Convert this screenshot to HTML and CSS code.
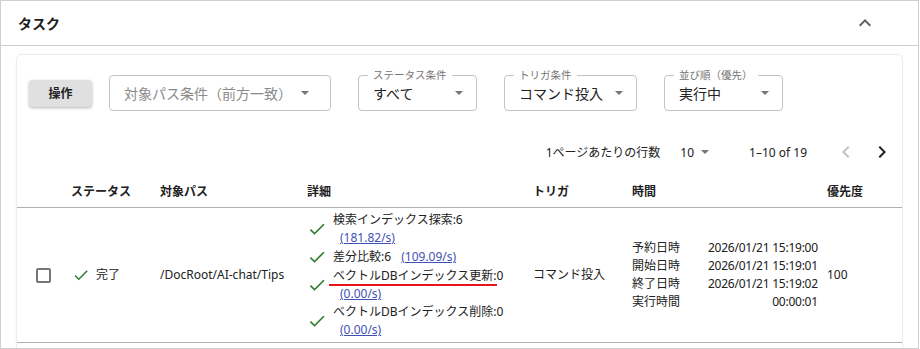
FILE: index.html
```html
<!DOCTYPE html>
<html lang="ja">
<head>
<meta charset="utf-8">
<title>タスク</title>
<link rel="stylesheet" href="styles.css">
</head>
<body>
<div class="panel">
  <div class="panel-header">
    <span class="title">タスク</span>
    <svg class="icon-expand" viewBox="0 0 24 24" width="24" height="24"><path d="M12 8l-6 6 1.41 1.41L12 10.83l4.59 4.58L18 14z"/></svg>
  </div>
  <div class="panel-body">
    <div class="card">
      <div class="filters">
        <button class="op-btn">操作</button>
        <div class="select s-path"><span class="placeholder">対象パス条件（前方一致）</span><span class="caret"></span></div>
        <div class="select s-status"><span class="flabel">ステータス条件</span><span class="value">すべて</span><span class="caret"></span></div>
        <div class="select s-trigger"><span class="flabel">トリガ条件</span><span class="value">コマンド投入</span><span class="caret"></span></div>
        <div class="select s-order"><span class="flabel">並び順（優先）</span><span class="value">実行中</span><span class="caret"></span></div>
      </div>
      <div class="pager">
        <span class="rpp-label">1ページあたりの行数</span>
        <span class="rpp-select">10<span class="caret small"></span></span>
        <span class="range">1–10 of 19</span>
        <svg class="pg-btn disabled" viewBox="0 0 24 24" width="24" height="24"><path d="M15.41 7.41L14 6l-6 6 6 6 1.41-1.41L10.83 12z"/></svg>
        <svg class="pg-btn" viewBox="0 0 24 24" width="24" height="24"><path d="M10 6L8.59 7.41 13.17 12l-4.58 4.59L10 18l6-6z"/></svg>
      </div>
      <div class="table">
        <div class="grid thead">
          <div></div>
          <div>ステータス</div>
          <div>対象パス</div>
          <div>詳細</div>
          <div>トリガ</div>
          <div>時間</div>
          <div>優先度</div>
        </div>
        <div class="grid trow">
          <div class="c-check"><span class="checkbox"></span></div>
          <div class="c-status"><svg class="ok" viewBox="0 0 24 24" width="18" height="18"><path d="M9 16.17L4.83 12l-1.42 1.41L9 19 21 7l-1.41-1.41z"/></svg><span>完了</span></div>
          <div class="c-path">/DocRoot/AI-chat/Tips</div>
          <div class="c-detail">
            <div class="ditem"><svg class="ok" viewBox="0 0 24 24" width="20" height="20"><path d="M9 16.17L4.83 12l-1.42 1.41L9 19 21 7l-1.41-1.41z"/></svg><div class="dtext">検索インデックス探索:6 <a class="rate">(181.82/s)</a></div></div>
            <div class="ditem"><svg class="ok" viewBox="0 0 24 24" width="20" height="20"><path d="M9 16.17L4.83 12l-1.42 1.41L9 19 21 7l-1.41-1.41z"/></svg><div class="dtext">差分比較:6 <a class="rate">(109.09/s)</a></div></div>
            <div class="ditem"><svg class="ok" viewBox="0 0 24 24" width="20" height="20"><path d="M9 16.17L4.83 12l-1.42 1.41L9 19 21 7l-1.41-1.41z"/></svg><div class="dtext marked">ベクトルDBインデックス更新:0 <a class="rate">(0.00/s)</a><span class="redline"></span></div></div>
            <div class="ditem"><svg class="ok" viewBox="0 0 24 24" width="20" height="20"><path d="M9 16.17L4.83 12l-1.42 1.41L9 19 21 7l-1.41-1.41z"/></svg><div class="dtext">ベクトルDBインデックス削除:0 <a class="rate">(0.00/s)</a></div></div>
          </div>
          <div class="c-trigger">コマンド投入</div>
          <div class="c-time">
            <span>予約日時</span><span class="tv">2026/01/21 15:19:00</span>
            <span>開始日時</span><span class="tv">2026/01/21 15:19:01</span>
            <span>終了日時</span><span class="tv">2026/01/21 15:19:02</span>
            <span>実行時間</span><span class="tv">00:00:01</span>
          </div>
          <div class="c-prio">100</div>
        </div>
      </div>
    </div>
  </div>
</div>
</body>
</html>
```

FILE: styles.css
```css
* { box-sizing: border-box; }
html, body { margin: 0; padding: 0; background: #fff; }
body {
  font-family: "Noto Sans", "Noto Sans CJK JP", sans-serif;
  color: #212121;
  font-size: 12px;
}
.panel {
  width: 919px;
  height: 349px;
  border: 1px solid #cfcfcf;
  overflow: hidden;
}
.panel-header {
  height: 45px;
  border-bottom: 1px solid #cfcfcf;
  display: flex;
  align-items: center;
  justify-content: space-between;
  padding: 0 41px 0 17px;
}
.title { font-size: 14px; font-weight: bold; color: #1e1e1e; }
.icon-expand { fill: #5f5f5f; }
.panel-body { padding: 8px 15px 0 15px; }
.card {
  border: 1px solid #ededed;
  border-radius: 6px;
  box-shadow: 0 0 2px rgba(0,0,0,0.06);
  height: 400px;
}
.filters {
  display: flex;
  align-items: center;
  padding: 20px 0 0 12px;
}
.op-btn {
  width: 63px;
  height: 27px;
  border: none;
  border-radius: 4px;
  background: #e0e0e0;
  box-shadow: 0 1px 3px rgba(0,0,0,0.3);
  font-family: inherit;
  font-size: 12px;
  font-weight: bold;
  color: #222;
  padding: 0;
}
.select {
  position: relative;
  height: 36px;
  border: 1px solid #c4c4c4;
  border-radius: 4px;
  display: flex;
  align-items: center;
  justify-content: space-between;
  padding: 0 13px 0 14px;
  font-size: 14px;
  margin-left: 27px;
}
.s-path { width: 222px; margin-left: 17px; padding-right: 21px; }
.s-status { width: 119px; }
.s-trigger { width: 133px; }
.s-order { width: 119px; }
.placeholder { color: #8a8a8a; }
.value { color: #222; }
.flabel {
  position: absolute;
  top: -8px;
  left: 9px;
  padding: 0 5px;
  background: #fff;
  font-size: 10.5px;
  line-height: 14px;
  color: #757575;
}
.caret {
  width: 0; height: 0;
  border-left: 4px solid transparent;
  border-right: 4px solid transparent;
  border-top: 4px solid #757575;
}
.pager {
  display: flex;
  align-items: center;
  justify-content: flex-end;
  height: 40px;
  margin-top: 21px;
  padding-right: 8px;
  font-size: 12px;
}
.rpp-select {
  display: flex;
  align-items: center;
  margin-left: 20px;
}
.caret.small { margin-left: 7px; }
.range { margin-left: 40px; }
.pg-btn { fill: #222; }
.pg-btn.disabled { fill: #c4c4c4; margin-left: 27px; margin-right: 12px; }
.grid {
  display: grid;
  grid-template-columns: 54px 89px 147px 226px 99px 195px 1fr;
}
.thead {
  height: 36px;
  align-items: end;
  padding-bottom: 6px;
  border-bottom: 1px solid #b0b0b0;
  font-weight: bold;
  line-height: 18px;
}
.trow {
  height: 135px;
  align-items: center;
  border-bottom: 1px solid #b0b0b0;
  line-height: 18px;
}
.c-check { padding-left: 19px; display: flex; }
.checkbox {
  width: 15px; height: 15px;
  border: 2px solid #757575;
  border-radius: 2px;
}
.c-status { display: flex; align-items: center; }
.c-status .ok { margin-left: 1px; margin-right: 6px; }
.ok { fill: #2e7d32; flex: none; }
.c-detail { display: flex; flex-direction: column; }
.ditem { display: flex; align-items: center; }
.ditem .ok { margin-right: 6px; }
.dtext { width: 190px; position: relative; }
.rate {
  display: inline-block;
  margin-left: 7px;
  color: #3f51b5;
  text-decoration: underline;
}
.redline {
  position: absolute;
  left: -4px;
  top: 17px;
  width: 168px;
  height: 2px;
  background: #e8141c;
}
.c-time {
  display: grid;
  grid-template-columns: 76px max-content;
  white-space: nowrap;
}
.tv { text-align: right; letter-spacing: -0.25px; }
```
